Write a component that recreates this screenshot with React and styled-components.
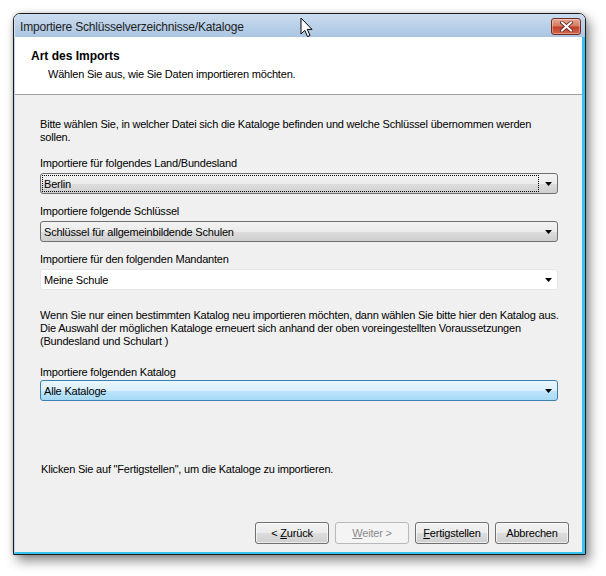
import React from 'react';
import styled, { createGlobalStyle } from 'styled-components';

const GlobalStyle = createGlobalStyle`
  html, body {
    margin: 0;
    padding: 0;
    background: #ffffff;
  }
  body {
    font-family: "Liberation Sans", Arial, sans-serif;
    font-size: 11px;
    letter-spacing: -0.2px;
    color: #000000;
  }
  * {
    box-sizing: border-box;
  }
`;

const Page = styled.div`
  position: relative;
  width: 606px;
  height: 576px;
  padding: 13px 0 0 13px;
`;

const Window = styled.div`
  display: flex;
  flex-direction: column;
  width: 573px;
  height: 542px;
  border: 1px solid #1c1c1c;
  border-radius: 7px 7px 0 0;
  overflow: hidden;
  box-shadow: 4px 6px 12px rgba(0, 0, 0, 0.45), 0 0 5px rgba(0, 0, 0, 0.18);
`;

const TitleBar = styled.div`
  display: flex;
  align-items: center;
  justify-content: space-between;
  height: 23px;
  padding: 0 4px 0 5px;
  background: linear-gradient(#cbdcef, #aac5e2);
  border-left: 1px solid #d6e4f3;
`;

const Title = styled.span`
  font-size: 12px;
  color: #1e1e1e;
  padding-top: 2px;
`;

const CloseButton = styled.div`
  display: flex;
  align-items: center;
  justify-content: center;
  width: 30px;
  height: 17px;
  margin-top: 2px;
  border: 1px solid #70291c;
  border-radius: 3px;
  background: linear-gradient(#e9a897 0%, #d67a63 45%, #c2412a 55%, #d2654c 100%);
  box-shadow: inset 0 0 0 1px rgba(255, 255, 255, 0.35);
`;

const Frame = styled.div`
  flex: 1;
  display: flex;
  flex-direction: column;
  border-left: 1px solid #bcd4ec;
  border-right: 3px solid #35c2ef;
  border-bottom: 2px solid #35c2ef;
`;

const Header = styled.div`
  height: 58px;
  padding: 12px 0 0 16px;
  background: #ffffff;
  border-bottom: 1px solid #a0a0a0;
`;

const HeaderTitle = styled.div`
  font-size: 12px;
  font-weight: bold;
  line-height: 15px;
  letter-spacing: 0;
`;

const HeaderSub = styled.div`
  margin-top: 4px;
  padding-left: 17px;
  line-height: 13px;
`;

const Body = styled.div`
  flex: 1;
  display: flex;
  flex-direction: column;
  padding: 23px 13px 8px 25px;
  background: #f0f0f0;
`;

const Content = styled.div`
  display: flex;
  flex-direction: column;
  padding-right: 11px;
`;

const Text = styled.div`
  line-height: 13px;
  white-space: nowrap;
  margin-top: ${p => p.$top || 0}px;
  padding-left: ${p => p.$indent || 0}px;
`;

const Label = styled.div`
  line-height: 14px;
  margin-top: ${p => p.$top || 0}px;
  margin-bottom: ${p => (p.$tight ? 1 : 3)}px;
`;

const comboSkins = {
  list: `
    border: 1px solid #707070;
    background: linear-gradient(#f3f3f3 0%, #ebebeb 50%, #dddddd 51%, #cfcfcf 100%);
  `,
  flat: `
    border: 1px solid #e6e6e6;
    background: #ffffff;
  `,
  hot: `
    border: 1px solid #3c7fb1;
    background: linear-gradient(#eaf6fd 0%, #d9f0fc 50%, #bee6fd 51%, #a7d9f5 100%);
  `,
};

const Combo = styled.div`
  display: flex;
  align-items: center;
  height: 21px;
  border-radius: 3px;
  ${p => comboSkins[p.$skin]}
`;

const ComboValue = styled.div`
  flex: 1;
  height: 17px;
  margin: 0 0 0 1px;
  padding-left: 1px;
  line-height: 16px;
  border: 1px dotted ${p => (p.$focus ? '#000000' : 'transparent')};
`;

const Arrow = styled.div`
  display: flex;
  align-items: center;
  justify-content: center;
  width: 17px;
  height: 100%;
  margin-left: 1px;
`;

const Footer = styled.div`
  display: flex;
  justify-content: flex-end;
  gap: 6px;
  margin-top: auto;
`;

const Button = styled.div`
  display: flex;
  align-items: center;
  justify-content: center;
  width: 74px;
  height: 22px;
  border-radius: 3px;
  border: 1px solid ${p => (p.$disabled ? '#b5b9bc' : '#707070')};
  color: ${p => (p.$disabled ? '#8a8a8a' : '#000000')};
  background: ${p =>
    p.$disabled
      ? '#f4f4f4'
      : 'linear-gradient(#f3f3f3 0%, #ebebeb 50%, #dddddd 51%, #cfcfcf 100%)'};
  box-shadow: ${p => (p.$disabled ? 'none' : 'inset 0 0 0 1px rgba(255,255,255,0.6)')};

  u {
    text-decoration: underline;
  }
`;

const Cursor = styled.svg`
  position: absolute;
  left: 300px;
  top: 17px;
`;

function DownArrow() {
  return (
    <svg width="7" height="4" viewBox="0 0 7 4">
      <path d="M0 0 H7 L3.5 4 Z" fill="#000000" />
    </svg>
  );
}

function Select({ skin, value, focus }) {
  return (
    <Combo $skin={skin}>
      <ComboValue $focus={focus}>{value}</ComboValue>
      <Arrow>
        <DownArrow />
      </Arrow>
    </Combo>
  );
}

export default function App() {
  return (
    <Page>
      <GlobalStyle />
      <Window>
        <TitleBar>
          <Title>Importiere Schlüsselverzeichnisse/Kataloge</Title>
          <CloseButton>
            <svg width="13" height="11" viewBox="0 0 13 11">
              <path
                d="M2 1.5 L11 9.5 M11 1.5 L2 9.5"
                stroke="#5a2218"
                strokeWidth="3.6"
                strokeLinecap="square"
              />
              <path
                d="M2 1.5 L11 9.5 M11 1.5 L2 9.5"
                stroke="#ffffff"
                strokeWidth="2"
                strokeLinecap="square"
              />
            </svg>
          </CloseButton>
        </TitleBar>
        <Frame>
          <Header>
            <HeaderTitle>Art des Imports</HeaderTitle>
            <HeaderSub>Wählen Sie aus, wie Sie Daten importieren möchten.</HeaderSub>
          </Header>
          <Body>
            <Content>
              <Text>
                Bitte wählen Sie, in welcher Datei sich die Kataloge befinden und welche Schlüssel übernommen werden
                <br />
                sollen.
              </Text>

              <Label $top={12}>Importiere für folgendes Land/Bundesland</Label>
              <Select skin="list" value="Berlin" focus />

              <Label $top={10}>Importiere folgende Schlüssel</Label>
              <Select skin="list" value="Schlüssel für allgemeinbildende Schulen" />

              <Label $top={10}>Importiere für den folgenden Mandanten</Label>
              <Select skin="flat" value="Meine Schule" />

              <Text $top={19}>
                Wenn Sie nur einen bestimmten Katalog neu importieren möchten, dann wählen Sie bitte hier den Katalog aus.
                <br />
                Die Auswahl der möglichen Kataloge erneuert sich anhand der oben voreingestellten Voraussetzungen
                <br />
                (Bundesland und Schulart )
              </Text>

              <Label $top={17} $tight>Importiere folgenden Katalog</Label>
              <Select skin="hot" value="Alle Kataloge" />

              <Text $top={62} $indent={1}>
                Klicken Sie auf "Fertigstellen", um die Kataloge zu importieren.
              </Text>
            </Content>
            <Footer>
              <Button>
                &lt;&nbsp;<u>Z</u>urück
              </Button>
              <Button $disabled>
                <u>W</u>eiter &gt;
              </Button>
              <Button>
                <u>F</u>ertigstellen
              </Button>
              <Button>Abbrechen</Button>
            </Footer>
          </Body>
        </Frame>
      </Window>
      <Cursor width="13" height="21" viewBox="0 0 13 21">
        <path
          d="M1 1 L1 17 L4.8 13.4 L7.6 19.6 L10 18.5 L7.3 12.4 L12 12.4 Z"
          fill="#ffffff"
          stroke="#000000"
          strokeWidth="1"
          strokeLinejoin="miter"
        />
      </Cursor>
    </Page>
  );
}
